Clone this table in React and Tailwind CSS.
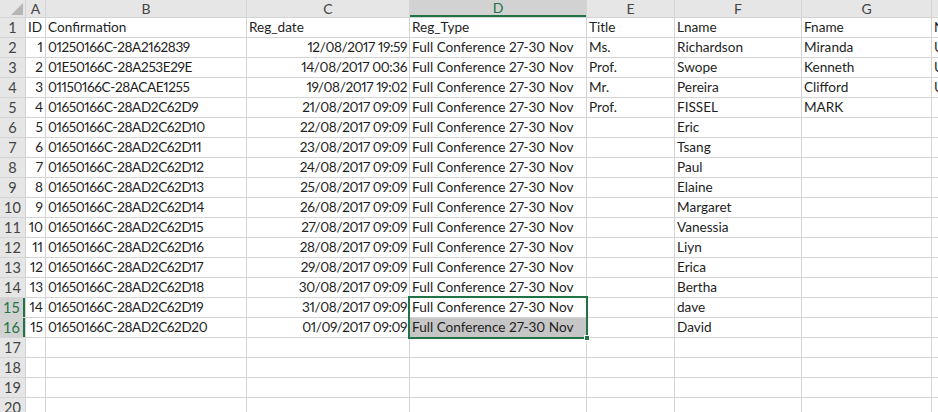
import React from "react";

const cols = ["A", "B", "C", "D", "E", "F", "G", "H"];

const data = [
  ["ID", "Confirmation", "Reg_date", "Reg_Type", "Title", "Lname", "Fname", "N"],
  ["1", "01250166C-28A2162839", "12/08/2017 19:59", "Full Conference 27-30 Nov", "Ms.", "Richardson", "Miranda", "U"],
  ["2", "01E50166C-28A253E29E", "14/08/2017 00:36", "Full Conference 27-30 Nov", "Prof.", "Swope", "Kenneth", "U"],
  ["3", "01150166C-28ACAE1255", "19/08/2017 19:02", "Full Conference 27-30 Nov", "Mr.", "Pereira", "Clifford", "U"],
  ["4", "01650166C-28AD2C62D9", "21/08/2017 09:09", "Full Conference 27-30 Nov", "Prof.", "FISSEL", "MARK", ""],
  ["5", "01650166C-28AD2C62D10", "22/08/2017 09:09", "Full Conference 27-30 Nov", "", "Eric", "", ""],
  ["6", "01650166C-28AD2C62D11", "23/08/2017 09:09", "Full Conference 27-30 Nov", "", "Tsang", "", ""],
  ["7", "01650166C-28AD2C62D12", "24/08/2017 09:09", "Full Conference 27-30 Nov", "", "Paul", "", ""],
  ["8", "01650166C-28AD2C62D13", "25/08/2017 09:09", "Full Conference 27-30 Nov", "", "Elaine", "", ""],
  ["9", "01650166C-28AD2C62D14", "26/08/2017 09:09", "Full Conference 27-30 Nov", "", "Margaret", "", ""],
  ["10", "01650166C-28AD2C62D15", "27/08/2017 09:09", "Full Conference 27-30 Nov", "", "Vanessia", "", ""],
  ["11", "01650166C-28AD2C62D16", "28/08/2017 09:09", "Full Conference 27-30 Nov", "", "Liyn", "", ""],
  ["12", "01650166C-28AD2C62D17", "29/08/2017 09:09", "Full Conference 27-30 Nov", "", "Erica", "", ""],
  ["13", "01650166C-28AD2C62D18", "30/08/2017 09:09", "Full Conference 27-30 Nov", "", "Bertha", "", ""],
  ["14", "01650166C-28AD2C62D19", "31/08/2017 09:09", "Full Conference 27-30 Nov", "", "dave", "", ""],
  ["15", "01650166C-28AD2C62D20", "01/09/2017 09:09", "Full Conference 27-30 Nov", "", "David", "", ""],
];

const TOTAL_ROWS = 20;

function Cell({ value, col, row }) {
  const rightAlign = row > 1 && (col === 0 || col === 2);
  const tight = row > 1 && (col === 1 || col === 2);
  const isD15 = row === 15 && col === 3;
  const isD16 = row === 16 && col === 3;
  return (
    <div
      className={
        "relative flex h-[19px] items-end overflow-visible whitespace-nowrap px-[2px] pb-[1px] text-[13.6px] leading-[17px] text-[#1e1e1e] proportional-nums " +
        (tight ? "tracking-[-0.4px] " : "") +
        (rightAlign ? "justify-end " : "justify-start ") +
        (isD16 ? "bg-[#c6c6c6]" : "bg-white")
      }
    >
      <span>{value}</span>
      {isD15 && (
        <div className="pointer-events-none absolute left-[-2px] top-[-2px] z-10 h-[43px] w-[180px] border-2 border-[#217346]">
          <div className="absolute bottom-[-4px] right-[-4px] h-[6px] w-[6px] border border-white bg-[#217346]" />
        </div>
      )}
    </div>
  );
}

export default function App() {
  const rows = [];
  for (let r = 1; r <= TOTAL_ROWS; r++) rows.push(r);
  return (
    <div
      className="h-[412px] w-[938px] overflow-hidden bg-[#d4d4d4]"
      style={{ fontFamily: "Lato, 'Open Sans', sans-serif" }}
    >
      <div className="grid grid-cols-[25px_19px_200px_162px_176px_87px_126px_129px_100px] gap-px">
        <div className="relative h-[17px] bg-[#e6e6e6]">
          <svg className="absolute bottom-[2px] right-[2px]" width="12" height="12" viewBox="0 0 12 12">
            <polygon points="12,0 12,12 0,12" fill="#b6b6b6" />
          </svg>
        </div>
        {cols.map((c, i) => (
          <div
            key={c}
            className={
              "flex h-[17px] items-center justify-center text-[14px] leading-none " +
              (i === 3
                ? "border-b-2 border-[#217346] bg-[#d2d2d2] text-[#217346]"
                : "bg-[#e6e6e6] text-[#444444]")
            }
          >
            {c}
          </div>
        ))}
        {rows.map((r) => {
          const rowData = data[r - 1] || [];
          const sel = r === 15 || r === 16;
          return (
            <React.Fragment key={r}>
              <div
                className={
                  "flex h-[19px] items-end justify-center pb-[1px] text-[14.5px] leading-[17px] " +
                  (sel
                    ? "border-r-2 border-[#217346] bg-[#d2d2d2] text-[#217346]"
                    : "bg-[#e6e6e6] text-[#444444]")
                }
              >
                {r}
              </div>
              {cols.map((c, ci) => (
                <Cell key={c} value={rowData[ci] || ""} col={ci} row={r} />
              ))}
            </React.Fragment>
          );
        })}
      </div>
    </div>
  );
}
